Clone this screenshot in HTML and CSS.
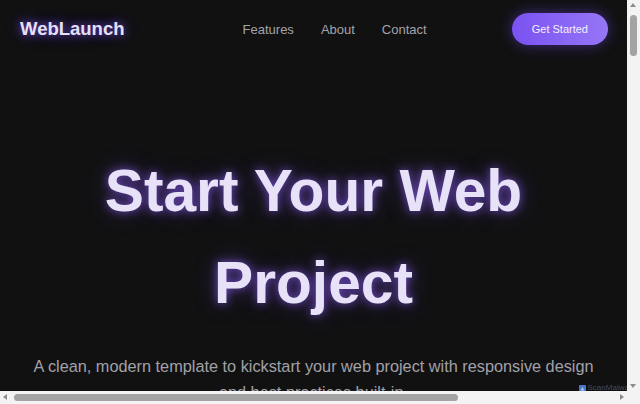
FILE: index.html
```html
<!DOCTYPE html>
<html lang="en">
<head>
<meta charset="utf-8"/>
<title>WebLaunch</title>
<meta name="viewport" content="width=device-width">
<link rel="stylesheet" href="styles.css">
</head>
<body>
<header class="site-header">
	<a class="logo" href="#">WebLaunch</a>
	<nav>
		<ul class="nav-links">
			<li><a href="#features">Features</a></li>
			<li><a href="#about">About</a></li>
			<li><a href="#contact">Contact</a></li>
		</ul>
	</nav>
	<a class="btn" href="#contact">Get Started</a>
</header>

<section class="hero">
	<h1>Start Your Web Project</h1>
	<p>A clean, modern template to kickstart your web project with responsive design and best practices built-in.</p>
	<div class="hero-actions">
		<a class="btn btn-lg" href="#contact">Get Started</a>
		<a class="btn btn-lg btn-ghost" href="#features">Learn More</a>
	</div>
</section>

<section id="features" class="section">
	<h2>Features</h2>
	<p class="section-lead">Everything you need to launch a fast, good looking site.</p>
	<div class="cards">
		<div class="card"><h3>Responsive</h3><p>Layouts that adapt to phones, tablets and desktops without extra work.</p></div>
		<div class="card"><h3>Fast</h3><p>Lightweight markup and styles so pages load in a blink.</p></div>
		<div class="card"><h3>Accessible</h3><p>Semantic HTML and good contrast for every visitor.</p></div>
		<div class="card"><h3>Dark Mode</h3><p>A calm dark palette with soft purple accents.</p></div>
	</div>
</section>

<section id="about" class="section">
	<h2>About</h2>
	<p class="section-lead">WebLaunch is a starter template made for developers who want a clean base to build on. Drop in your content, tweak the colours and ship.</p>
</section>

<section id="contact" class="section">
	<h2>Contact</h2>
	<p class="section-lead">Have a question or a project in mind? Send us a message.</p>
</section>

<footer class="site-footer">
	<p>&copy; 2024 WebLaunch. All rights reserved.</p>
</footer>

<div class="badge"><svg width="7" height="8" viewBox="0 0 7 8"><rect width="7" height="8" rx="1" fill="#4a78c8"/><path d="M1.5 5.5 3.5 2l2 3.5z" fill="#a9c4f0"/></svg>ScanMalware</div>

<!-- window scrollbars as they appear in the capture -->
<div class="scrollbar scrollbar-v">
	<span class="arrow arrow-up"></span>
	<span class="thumb"></span>
	<span class="arrow arrow-down"></span>
</div>
<div class="scrollbar scrollbar-h">
	<span class="arrow arrow-left"></span>
	<span class="thumb"></span>
	<span class="arrow arrow-right"></span>
</div>
</body>
</html>
```

FILE: styles.css
```css
* {
	box-sizing:border-box;
}
body {
	margin:0 13px 0 0;
	overflow:hidden;
	background:#111112;
	color:#e6e0f7;
	font:400 16px/1.6 "Liberation Sans", Arial, sans-serif;
}
a {
	text-decoration:none;
}
.site-header {
	display:flex;
	align-items:center;
	justify-content:space-between;
	padding:13px 19px 13px 20px;
}
.logo {
	padding-right:6px;
	font-size:18.5px;
	font-weight:700;
	color:#e6e0f8;
	text-shadow:0 0 8px rgba(124,77,255,.75), 0 0 16px rgba(124,77,255,.4);
}
.nav-links {
	display:flex;
	list-style:none;
	margin:0;
	padding:0;
}
.nav-links li {
	margin-left:27px;
}
.nav-links a {
	color:#a3a3aa;
	font-size:13px;
}
.btn {
	display:inline-block;
	padding:7px 20px;
	border:none;
	border-radius:999px;
	background:linear-gradient(90deg, #7a52f2, #9676f6);
	color:#f4f0ff;
	font:400 11px/18px "Liberation Sans", Arial, sans-serif;
	box-shadow:0 0 14px rgba(124,77,255,.45);
}
.btn-lg {
	padding:11px 28px;
	font-size:15px;
}
.btn-ghost {
	background:transparent;
	border:1px solid #7a52f2;
	box-shadow:none;
	color:#c9bdf7;
}
.hero {
	padding:87px 24px 120px;
	text-align:center;
}
.hero h1 {
	margin:0 0 24px;
	font-size:58.7px;
	line-height:1.57;
	color:#e7e2f7;
	text-shadow:0 0 10px rgba(139,92,246,.75), 0 0 22px rgba(139,92,246,.35);
}
.hero p {
	max-width:580px;
	margin:0 auto;
	font-size:16.3px;
	color:#a1a1a8;
}
.hero-actions {
	display:flex;
	justify-content:center;
	gap:16px;
	margin-top:40px;
}
.section {
	padding:100px 24px;
	text-align:center;
}
.section h2 {
	margin:0 0 12px;
	font-size:36px;
	color:#e7e2f7;
}
.section-lead {
	max-width:520px;
	margin:0 auto 48px;
	color:#a1a1a8;
}
.cards {
	display:grid;
	grid-template-columns:repeat(2, 1fr);
	gap:24px;
	text-align:left;
}
.card {
	padding:28px;
	background:#18181b;
	border:1px solid #26262b;
	border-radius:14px;
}
.card h3 {
	margin:0 0 10px;
	font-size:20px;
}
.card p {
	margin:0;
	color:#a1a1a8;
}
.site-footer {
	padding:40px 24px;
	border-top:1px solid #222;
	text-align:center;
	color:#71717a;
	font-size:14px;
}
.badge {
	position:fixed;
	right:4px;
	bottom:9px;
	z-index:1;
	display:flex;
	align-items:center;
	gap:2px;
	font-size:8px;
	color:rgba(120,135,170,.5);
}
.scrollbar {
	position:fixed;
	z-index:2;
	background:#f3f3f3;
}
.scrollbar-v {
	top:0;
	right:0;
	bottom:13px;
	width:13px;
}
.scrollbar-h {
	left:0;
	right:0;
	bottom:0;
	height:13px;
}
.thumb {
	position:absolute;
	border-radius:4px;
	background:#a3a3a3;
}
.scrollbar-v .thumb {
	top:15px;
	left:3px;
	width:7px;
	height:41px;
}
.scrollbar-h .thumb {
	top:3px;
	left:14px;
	width:444px;
	height:7px;
}
.arrow {
	position:absolute;
	width:0;
	height:0;
	border:3.5px solid transparent;
}
.arrow-up {
	top:3px;
	left:3px;
	border-top:0;
	border-bottom:4px solid #8c8c8c;
}
.arrow-down {
	bottom:3px;
	left:3px;
	border-bottom:0;
	border-top:4px solid #8c8c8c;
}
.arrow-left {
	top:3px;
	left:3px;
	border-left:0;
	border-right:4px solid #8c8c8c;
}
.arrow-right {
	top:3px;
	right:16px;
	border-right:0;
	border-left:4px solid #8c8c8c;
}
```
